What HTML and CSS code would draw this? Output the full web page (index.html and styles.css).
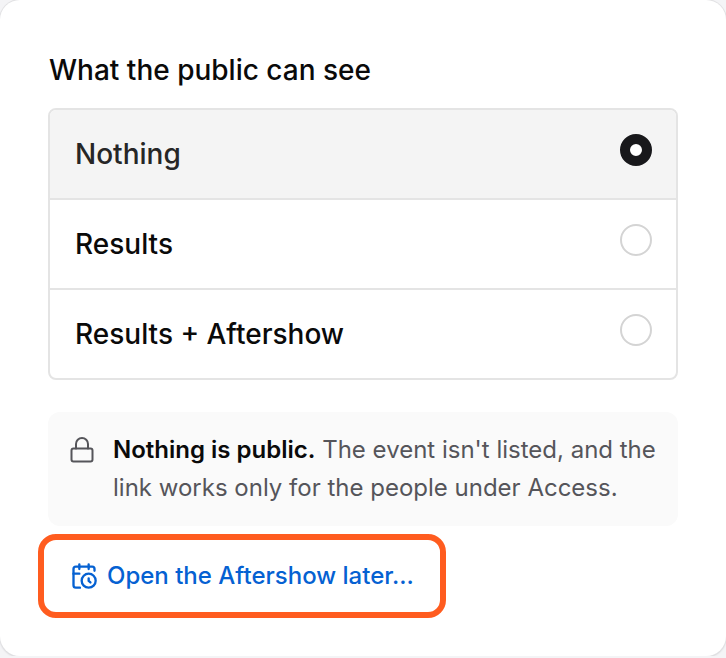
FILE: index.html
```html
<!DOCTYPE html>
<html lang="en">
<head>
<meta charset="utf-8">
<meta name="viewport" content="width=device-width, initial-scale=1">
<title>Event visibility</title>
<link rel="stylesheet" href="styles.css">
</head>
<body>
<main class="card">
  <fieldset class="visibility">
    <legend class="title">What the public can see</legend>
    <div class="options">
      <label class="option"><span>Nothing</span><input type="radio" name="visibility" value="nothing" checked></label>
      <label class="option"><span>Results</span><input type="radio" name="visibility" value="results"></label>
      <label class="option"><span>Results + Aftershow</span><input type="radio" name="visibility" value="aftershow"></label>
    </div>
  </fieldset>
  <div class="note">
    <svg class="lock" viewBox="0 0 28 28" aria-hidden="true">
      <rect x="3.5" y="12.5" width="21" height="13" rx="2"/>
      <path d="M8 12.5V8a6 6 0 0 1 12 0v4.5"/>
    </svg>
    <p><strong>Nothing is public.</strong> The event isn't listed, and the link works only for the people under Access.</p>
  </div>
  <div class="highlight">
    <a class="later" href="#later">
      <svg class="calendar" viewBox="0 0 24 24" aria-hidden="true">
        <path d="M21 7.5V6a2 2 0 0 0-2-2H5a2 2 0 0 0-2 2v14a2 2 0 0 0 2 2h3.5"/>
        <path d="M16 2v4M8 2v4M3 10h5"/>
        <path d="M17.5 17.5 16 16.25V14"/>
        <circle cx="16" cy="16" r="6"/>
      </svg>
      <span>Open the Aftershow later...</span>
    </a>
  </div>
</main>
</body>
</html>
```

FILE: styles.css
```css
* {
  box-sizing: border-box;
}

body {
  margin: 0;
  background: #f4f4f6;
  color: #0a0a0a;
  font-family: Inter, "Liberation Sans", sans-serif;
}

.card {
  padding: 50px 48px 38px;
  background: #fff;
  border-radius: 20px;
  box-shadow: 0 0 0 1px #e2e2e4, 0 1px 2px #c4c4c8;
}

.visibility {
  min-width: 0;
  margin: 0;
  padding: 0;
  border: 0;
}

.title {
  padding: 0 1px;
  margin-bottom: 18px;
  font-size: 28px;
  font-weight: 500;
  line-height: 40px;
}

.options {
  overflow: hidden;
  border: 2px solid #e4e4e4;
  border-radius: 8px;
}

.option {
  display: flex;
  justify-content: space-between;
  align-items: flex-start;
  padding: 24px 24px 24px 25px;
  font-size: 28px;
  font-weight: 500;
  line-height: 40px;
}

.option + .option {
  border-top: 2px solid #e4e4e4;
}

.option:has(:checked) {
  background: #f4f4f4;
  color: #262626;
}

.option input {
  appearance: none;
  width: 32px;
  height: 32px;
  margin: 0;
  border: 2px solid #d4d4d4;
  border-radius: 50%;
  background: #fff;
}

.option input:checked {
  border: 10px solid #18181b;
}

.note {
  display: flex;
  gap: 17px;
  margin-top: 32px;
  padding: 19px 20px;
  border-radius: 12px;
  background: #fafafa;
  color: #55555a;
  font-size: 24px;
  line-height: 38px;
}

.note p {
  margin: 0;
}

.note strong {
  color: #0a0a0a;
  font-weight: 600;
}

.lock,
.calendar {
  flex: none;
  width: 28px;
  height: 28px;
  fill: none;
  stroke: currentColor;
  stroke-width: 2;
  stroke-linecap: round;
  stroke-linejoin: round;
}

.lock {
  margin-top: 5px;
}

.highlight {
  width: fit-content;
  margin: 8px 0 0 -10px;
  padding: 16px 26px;
  border: 6px solid #ff5c1f;
  border-radius: 18px;
}

.later {
  display: flex;
  align-items: center;
  gap: 9px;
  color: #0561d2;
  font-size: 24px;
  font-weight: 500;
  line-height: 40px;
  text-decoration: none;
}
```
